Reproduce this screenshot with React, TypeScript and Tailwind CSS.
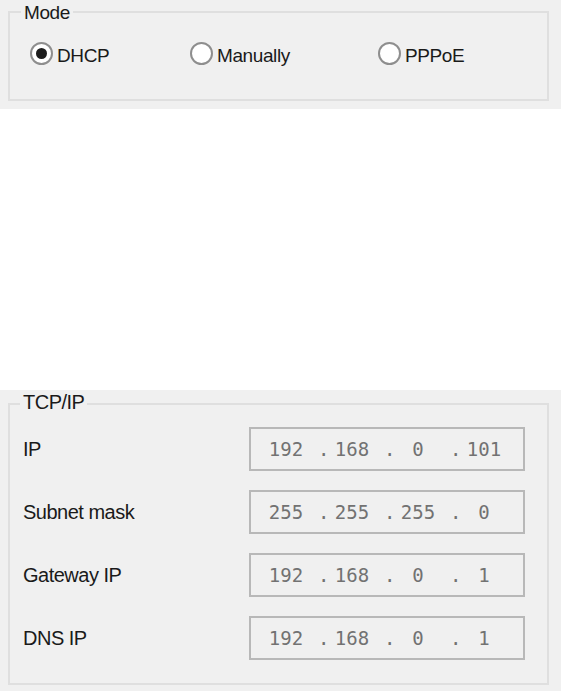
import React from 'react';

type Mode = 'dhcp' | 'manual' | 'pppoe';

const modes: { id: Mode; label: string; width: string }[] = [
  { id: 'dhcp', label: 'DHCP', width: 'w-[160px]' },
  { id: 'manual', label: 'Manually', width: 'w-[188px]' },
  { id: 'pppoe', label: 'PPPoE', width: 'w-[120px]' },
];

const fields = [
  { label: 'IP', value: ['192', '168', '0', '101'] },
  { label: 'Subnet mask', value: ['255', '255', '255', '0'] },
  { label: 'Gateway IP', value: ['192', '168', '0', '1'] },
  { label: 'DNS IP', value: ['192', '168', '0', '1'] },
];

function Radio({ checked }: { checked: boolean }) {
  return (
    <span className="w-[23px] h-[23px] shrink-0 rounded-full border-2 border-[#8e8e8e] bg-white flex items-center justify-center">
      {checked && <span className="w-[11px] h-[11px] rounded-full bg-[#1c1c1c]" />}
    </span>
  );
}

function IpBox({ parts }: { parts: string[] }) {
  return (
    <div className="w-[276px] h-[44px] border-2 border-[#b8b8b8] bg-[#f0f0f0] flex items-center pl-[14px] font-['DejaVu_Sans_Mono',monospace] text-[19px] text-[#727272]">
      {parts.map((p, i) => (
        <React.Fragment key={i}>
          <span className="w-[42px] text-center">{p}</span>
          {i < parts.length - 1 && <span className="w-[24px] pl-[11px]">.</span>}
        </React.Fragment>
      ))}
    </div>
  );
}

export default function App() {
  const mode: Mode = 'dhcp';

  return (
    <div className="min-h-screen bg-white text-[#1a1a1a] font-['Liberation_Sans',Arial,sans-serif]">
      {/* Mode group */}
      <section className="bg-[#f0f0f0] pt-[11px] pb-[8px] pl-[8px] pr-[12px]">
        <div className="h-[90px] border-2 border-[#dfdfdf]">
          <div className="-mt-[10px] ml-[11px] px-[3px] w-fit bg-[#f0f0f0] text-[19px] leading-[20px] tracking-[-0.4px]">
            Mode
          </div>
          <div className="mt-[17px] pl-[20px] flex">
            {modes.map((m) => (
              <label key={m.id} className={`${m.width} flex items-center gap-[4px]`}>
                <Radio checked={mode === m.id} />
                <span className="pt-[4px] text-[19px] leading-[23px] tracking-[-0.4px]">{m.label}</span>
              </label>
            ))}
          </div>
        </div>
      </section>

      <div className="h-[281px]" />

      {/* TCP/IP group */}
      <section className="bg-[#f0f0f0] pt-[13px] pb-[6px] pl-[8px] pr-[12px]">
        <div className="border-2 border-[#dfdfdf] pb-[23px]">
          <div className="-mt-[14px] ml-[10px] px-[3px] w-fit bg-[#f0f0f0] text-[20px] leading-[22px] tracking-[-0.5px]">
            TCP/IP
          </div>
          <div className="mt-[14px] flex flex-col gap-[19px]">
            {fields.map((f) => (
              <div key={f.label} className="flex items-center pl-[13px]">
                <span className="w-[226px] text-[20px] tracking-[-0.5px]">{f.label}</span>
                <IpBox parts={f.value} />
              </div>
            ))}
          </div>
        </div>
      </section>
    </div>
  );
}
